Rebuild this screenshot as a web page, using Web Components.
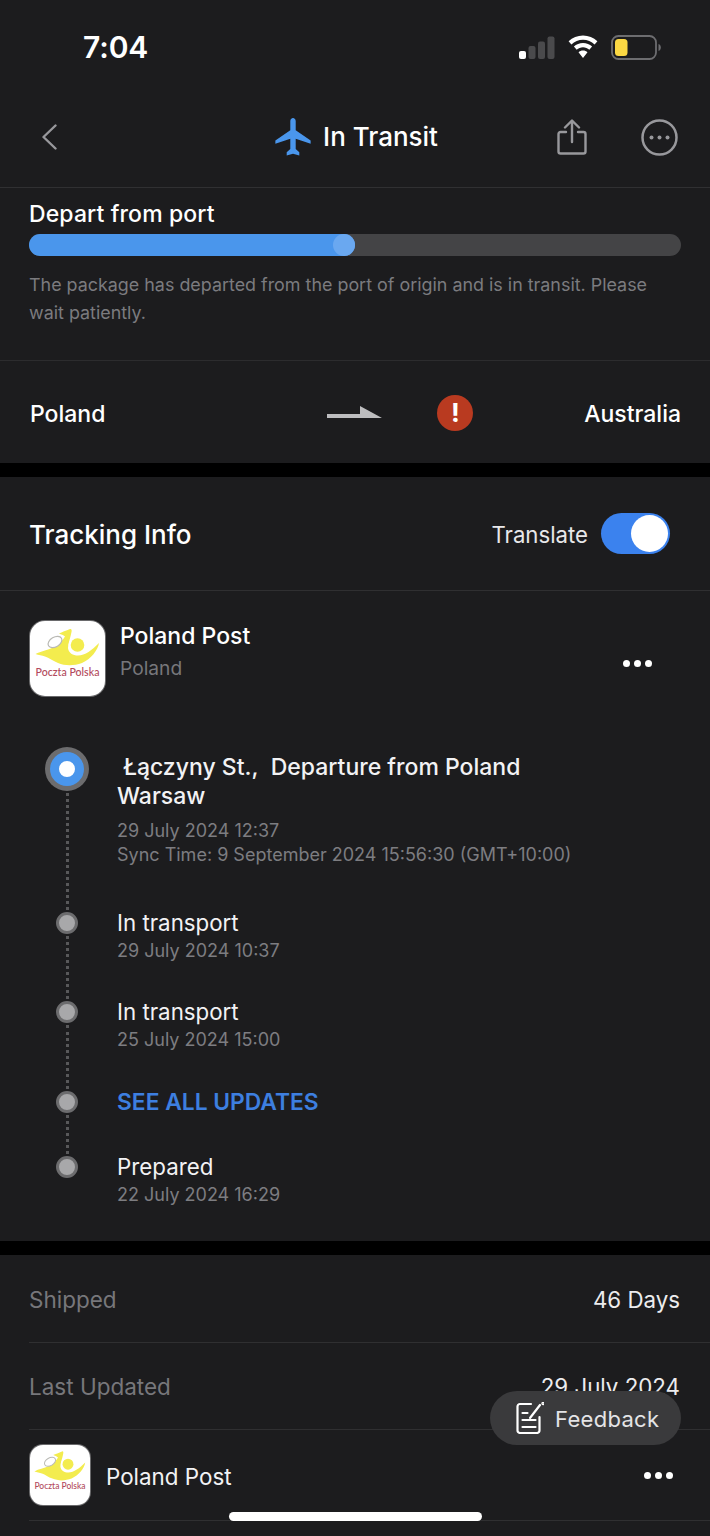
<!DOCTYPE html>
<html>
<head>
<meta charset="utf-8">
<style>
  html, body { margin: 0; padding: 0; background: #000; }
  body { width: 710px; height: 1536px; overflow: hidden; position: relative; font-family: 'Inter', 'Liberation Sans', sans-serif; color: #fff; }
</style>
</head>
<body>
<status-bar></status-bar>
<nav-bar></nav-bar>
<progress-card>
  <span slot="title">Depart from port</span>
  The package has departed from the port of origin and is in transit. Please wait patiently.
</progress-card>
<route-row from="Poland" to="Australia"></route-row>
<tracking-card>
  <carrier-head name="Poland Post" country="Poland"></carrier-head>
  <track-event kind="current" height="165">
    <span slot="title">&nbsp;Łączyny St.,&nbsp; Departure from Poland<br>Warsaw</span>
    <span slot="meta">29 July 2024 12:37<br>Sync Time: 9 September 2024 15:56:30 (GMT+10:00)</span>
  </track-event>
  <track-event height="89">
    <span slot="title">In transport</span>
    <span slot="meta">29 July 2024 10:37</span>
  </track-event>
  <track-event height="90">
    <span slot="title">In transport</span>
    <span slot="meta">25 July 2024 15:00</span>
  </track-event>
  <track-event kind="link" height="65">
    <span slot="title">SEE ALL UPDATES</span>
  </track-event>
  <track-event kind="last" height="83">
    <span slot="title">Prepared</span>
    <span slot="meta">22 July 2024 16:29</span>
  </track-event>
</tracking-card>
<detail-list>
  <detail-row label="Shipped" value="46 Days"></detail-row>
  <detail-row label="Last Updated" value="29 July 2024"></detail-row>
  <carrier-row name="Poland Post"></carrier-row>
</detail-list>
<feedback-pill>Feedback</feedback-pill>
<home-indicator></home-indicator>

<script>
const baseFont = `font-family: 'Inter', 'Liberation Sans', sans-serif;`;

class StatusBar extends HTMLElement {
  constructor() {
    super();
    this.attachShadow({ mode: 'open' });
    this.shadowRoot.innerHTML = `
    <style>
      :host { display: flex; align-items: center; justify-content: space-between; height: 95px; box-sizing: border-box; padding: 0 49px 2px 83px; background: #1c1c1e; ${baseFont} }
      .time { font-size: 30px; font-weight: 600; color: #fff; letter-spacing: -0.1px; }
      .icons { display: flex; align-items: center; gap: 13px; margin-top: 2px; }
      svg { display: block; }
    </style>
    <span class="time">7:04</span>
    <div class="icons">
      <svg width="36" height="24" viewBox="0 0 36 24">
        <rect x="0" y="15" width="7" height="8" rx="2" fill="#fff"/>
        <rect x="9.5" y="10" width="7" height="13" rx="2" fill="#4a4a4c"/>
        <rect x="19" y="5.5" width="7" height="17.5" rx="2" fill="#4a4a4c"/>
        <rect x="28.5" y="0.5" width="7" height="22.5" rx="2" fill="#4a4a4c"/>
      </svg>
      <svg width="30" height="24" viewBox="0 0 30 24" fill="#fff" style="margin-top:-1px">
        <path d="M15 0.5C9.5 0.5 4.5 2.6 0.6 6.2L3.4 9.4C6.5 6.5 10.6 4.8 15 4.8s8.5 1.7 11.6 4.6l2.8-3.2C25.5 2.6 20.5 0.5 15 0.5z"/>
        <path d="M15 8c-3.500 0-6.700 1.300-9.100 3.500l2.800 3.200c1.700-1.500 3.900-2.400 6.300-2.400s4.600 0.900 6.300 2.400l2.800-3.200C21.700 9.300 18.500 8 15 8z"/>
        <path d="M15 15.500c-1.700 0-3.300 0.600-4.500 1.700L15 23l4.500-5.800c-1.200-1.100-2.800-1.700-4.500-1.700z"/>
      </svg>
      <svg width="50" height="25" viewBox="0 0 50 25">
        <rect x="1" y="1" width="44" height="23" rx="6.5" fill="none" stroke="#6d6d70" stroke-width="1.800"/>
        <rect x="4" y="4" width="12.500" height="17" rx="3.500" fill="#fbd843"/>
        <path d="M47.500 9c1.500 0.500 2.300 1.900 2.300 3.500s-0.800 3-2.300 3.500z" fill="#6d6d70"/>
      </svg>
    </div>`;
  }
}

class NavBar extends HTMLElement {
  constructor() {
    super();
    this.attachShadow({ mode: 'open' });
    this.shadowRoot.innerHTML = `
    <style>
      :host { display: grid; grid-template-columns: 1fr auto 1fr; align-items: center; height: 93px; box-sizing: border-box; padding: 0 32px 8px 41px; background: #1c1c1e; border-bottom: 1px solid #303032; ${baseFont} }
      .title { display: flex; align-items: center; gap: 12px; padding-right: 6px; font-size: 26px; font-weight: 500; color: #fff; }
      .title span { margin-top: -2px; }
      .right { display: flex; justify-content: flex-end; align-items: center; gap: 54px; }
      svg { display: block; }
    </style>
    <svg width="17" height="26" viewBox="0 0 17 26" fill="none" stroke="#98989c" stroke-width="2.400" stroke-linecap="round" stroke-linejoin="round"><path d="M14.500 1.500 2.500 13l12 11.500"/></svg>
    <div class="title">
      <svg width="36" height="38" viewBox="2 2 20 20" fill="#4a96ec" preserveAspectRatio="none"><path d="M21.800 15.500v-1.700l-8.300-5.300V3.600C13.500 2.700 12.800 2 12 2s-1.500 0.700-1.500 1.600v4.900l-8.300 5.300v1.700l8.300-2.600v5.400L8.500 20v1.700l3.500-0.900 3.500 0.900V20l-2-1.700v-5.400z"/></svg>
      <span>In Transit</span>
    </div>
    <div class="right">
      <svg width="30" height="36" viewBox="0 0 30 36" fill="none" stroke="#98989c" stroke-width="2.400" stroke-linecap="round" stroke-linejoin="round"><path d="M9 13H3.500A2 2 0 0 0 1.500 15v17.500a2 2 0 0 0 2 2h23a2 2 0 0 0 2-2V15a2 2 0 0 0-2-2H21"/><path d="M15 23V2M8 8.500 15 1.500l7 7"/></svg>
      <svg width="37" height="37" viewBox="0 0 37 37"><circle cx="18.500" cy="18.500" r="17" fill="none" stroke="#98989c" stroke-width="2.500"/><circle cx="10.500" cy="18.500" r="2" fill="#98989c"/><circle cx="18.500" cy="18.500" r="2" fill="#98989c"/><circle cx="26.500" cy="18.500" r="2" fill="#98989c"/></svg>
    </div>`;
  }
}

class ProgressCard extends HTMLElement {
  constructor() {
    super();
    this.attachShadow({ mode: 'open' });
    this.shadowRoot.innerHTML = `
    <style>
      :host { display: block; height: 173px; box-sizing: border-box; padding: 13px 29px 0 29px; background: #1c1c1e; border-bottom: 1px solid #2c2c2e; ${baseFont} }
      .title { font-size: 23px; font-weight: 500; line-height: 27px; color: #fff; letter-spacing: 0.12px; }
      .track { margin-top: 6px; height: 22px; border-radius: 11px; background: #444446; position: relative; }
      .fill { width: 326px; height: 22px; border-radius: 11px; background: #4a96ec; position: relative; }
      .fill::after { content: ''; position: absolute; right: 0; top: 0; width: 22px; height: 22px; border-radius: 50%; background: #6aa8f0; }
      .text { margin: 15px 0 0; font-size: 17.900px; line-height: 28px; color: #7b7b7f; }
    </style>
    <div class="title"><slot name="title"></slot></div>
    <div class="track"><div class="fill"></div></div>
    <p class="text"><slot></slot></p>`;
  }
}

class RouteRow extends HTMLElement {
  constructor() {
    super();
    this.attachShadow({ mode: 'open' });
    this.shadowRoot.innerHTML = `
    <style>
      :host { display: flex; align-items: center; height: 102px; box-sizing: border-box; padding: 1px 29px 0 30px; background: #1c1c1e; ${baseFont} }
      span.name { font-size: 23px; font-weight: 500; color: #fff; margin-top: 2px; }
      .mid { flex: 1; display: flex; align-items: center; padding-left: 222px; gap: 55px; }
      .alert { width: 36px; height: 36px; border-radius: 50%; background: #b93a20; color: #fff; font-size: 26px; font-weight: 700; line-height: 36px; text-align: center; }
      svg { display: block; margin-top: -1px; }
    </style>
    <span class="name">${this.getAttribute('from')}</span>
    <div class="mid">
      <svg width="55" height="12" viewBox="0 0 55 12"><path d="M0 8h33V0l22 12H0z" fill="#bdbdbf"/></svg>
      <div class="alert">!</div>
    </div>
    <span class="name">${this.getAttribute('to')}</span>`;
  }
}

class TrackingCard extends HTMLElement {
  constructor() {
    super();
    this.attachShadow({ mode: 'open' });
    this.shadowRoot.innerHTML = `
    <style>
      :host { display: block; margin-top: 14px; height: 764px; background: #1c1c1e; box-sizing: border-box; ${baseFont} }
      .head { display: flex; align-items: center; height: 114px; box-sizing: border-box; padding: 2px 40px 0 29px; border-bottom: 1px solid #2f2f31; }
      h2 { flex: 1; margin: 0; font-size: 26px; font-weight: 500; color: #fff; }
      .label { font-size: 22.200px; color: #e8e8ea; margin-right: 13px; }
      .toggle { width: 69px; height: 41px; border-radius: 21px; background: #3b82ee; position: relative; margin-top: -2px; }
      .toggle::after { content: ''; position: absolute; right: 2px; top: 2px; width: 37px; height: 37px; border-radius: 50%; background: #fff; }
    </style>
    <div class="head"><h2>Tracking Info</h2><span class="label">Translate</span><div class="toggle"></div></div>
    <slot></slot>`;
  }
}

const logoMarkup = (size) => `
  <svg width="${size}" height="${size}" viewBox="0 0 75 75">
    <path d="M5.500 33C11 30 17 29.500 24 26C29 23.500 33 19 35 15.500C33.500 14 31 13.500 29 12.500C32 11 36 9.800 40 8C41.500 7.500 42 9 41.500 11C40.500 17 38 22 38 27C38.500 32 43 34.500 48 34.500C55 34.500 62 29 69 22C68 29 61 38 52 42C44 45 35 45 28 42C23 40 19 37 15 35.500C12 34.500 8.500 34 5.500 33Z" fill="#f3ec4e"/>
    <circle cx="47.500" cy="24" r="8.800" fill="#fff"/>
    <circle cx="47.500" cy="24" r="6.800" fill="#f3ec4e"/>
    <ellipse cx="25" cy="21" rx="7.500" ry="4.800" transform="rotate(-30 25 21)" fill="#fff" stroke="#b9b9b4" stroke-width="1.200"/>
    <text x="37.500" y="55" text-anchor="middle" font-family="Lato, 'Liberation Sans', sans-serif" font-weight="500" font-size="10.600" fill="#b24a5c">Poczta Polska</text>
  </svg>`;

class CarrierHead extends HTMLElement {
  constructor() {
    super();
    this.attachShadow({ mode: 'open' });
    this.shadowRoot.innerHTML = `
    <style>
      :host { display: flex; align-items: flex-start; height: 156px; box-sizing: border-box; padding: 30px 58px 0 30px; ${baseFont} }
      .logo { width: 75px; height: 75px; border-radius: 15px; background: #fff; box-shadow: 0 0 0 1px #6a6a6c; flex: none; }
      .logo svg { display: block; }
      .info { flex: 1; margin-left: 15px; }
      .name { font-size: 23px; font-weight: 500; line-height: 30px; color: #fff; }
      .country { font-size: 19.200px; line-height: 30px; color: #77777b; margin-top: 2px; }
      .dots { display: flex; gap: 4px; margin-top: 39px; }
      .dots i { width: 7px; height: 7px; border-radius: 50%; background: #fff; }
    </style>
    <div class="logo">${logoMarkup(75)}</div>
    <div class="info"><div class="name">${this.getAttribute('name')}</div><div class="country">${this.getAttribute('country')}</div></div>
    <div class="dots"><i></i><i></i><i></i></div>`;
  }
}

class TrackEvent extends HTMLElement {
  constructor() {
    super();
    const kind = this.getAttribute('kind') || '';
    this.attachShadow({ mode: 'open' });
    this.shadowRoot.innerHTML = `
    <style>
      :host { display: grid; grid-template-columns: 44px 1fr; column-gap: 28px; padding-left: 45px; height: ${this.getAttribute('height')}px; box-sizing: border-box; ${baseFont} }
      .rail { display: flex; flex-direction: column; align-items: center; }
      .dot { flex: none; box-sizing: border-box; width: 22px; height: 22px; border-radius: 50%; background: #a8a8aa; border: 3px solid #6c6c6e; }
      .dot.current { width: 44px; height: 44px; border: 0; display: flex; align-items: center; justify-content: center; background: #6c6c6e; }
      .dot.current::after { content: ''; width: 16px; height: 16px; border-radius: 50%; background: #fff; border: 9px solid #4a96ec; flex: none; box-sizing: content-box; }
      .line { flex: 1; width: 0; border-left: 3px dotted #58585a; margin: 2px 0; }
      .current-body { padding-top: 4px; }
      .title { font-size: 22.300px; line-height: 29px; color: #f2f2f4; margin-top: -4px; }
      .current-body .title { font-size: 23px; font-weight: 500; margin-top: 2px; }
      .link { font-size: 22.800px; font-weight: 600; color: #3d7fe0; line-height: 22px; }
      .meta { font-size: 18px; line-height: 24px; color: #7d7d81; margin-top: 2px; }
      .current-body .meta { margin-top: 8px; }
    </style>
    <div class="rail">
      <div class="dot ${kind === 'current' ? 'current' : ''}"></div>
      ${kind === 'last' ? '' : '<div class="line"></div>'}
    </div>
    <div class="body ${kind === 'current' ? 'current-body' : ''}">
      <div class="${kind === 'link' ? 'link' : 'title'}"><slot name="title"></slot></div>
      <div class="meta"><slot name="meta"></slot></div>
    </div>`;
  }
}

class DetailList extends HTMLElement {
  constructor() {
    super();
    this.attachShadow({ mode: 'open' });
    this.shadowRoot.innerHTML = `
    <style>
      :host { display: block; margin-top: 14px; background: #1c1c1e; height: 300px; box-sizing: border-box; padding-left: 29px; ${baseFont} }
    </style>
    <slot></slot>`;
  }
}

class DetailRow extends HTMLElement {
  constructor() {
    super();
    this.attachShadow({ mode: 'open' });
    this.shadowRoot.innerHTML = `
    <style>
      :host { display: flex; align-items: center; justify-content: space-between; height: 87.500px; box-sizing: border-box; padding: 2px 30px 0 0; border-bottom: 1px solid #2f2f31; ${baseFont} }
      .label { font-size: 22.500px; color: #77777b; }
      .value { font-size: 22.300px; color: #ececee; }
    </style>
    <span class="label">${this.getAttribute('label')}</span>
    <span class="value">${this.getAttribute('value')}</span>`;
  }
}

class CarrierRow extends HTMLElement {
  constructor() {
    super();
    this.attachShadow({ mode: 'open' });
    this.shadowRoot.innerHTML = `
    <style>
      :host { display: flex; align-items: center; height: 91px; box-sizing: border-box; padding-right: 37px; border-bottom: 1px solid #2f2f31; ${baseFont} }
      .logo { width: 60px; height: 60px; margin-left: 1px; border-radius: 13px; background: #fff; box-shadow: 0 0 0 1px #6a6a6c; flex: none; }
      .logo svg { display: block; }
      .name { flex: 1; margin: 2px 0 0 16px; font-size: 22.400px; color: #f2f2f4; }
      .dots { display: flex; gap: 4px; }
      .dots i { width: 7px; height: 7px; border-radius: 50%; background: #fff; }
    </style>
    <div class="logo">${logoMarkup(60)}</div>
    <span class="name">${this.getAttribute('name')}</span>
    <div class="dots"><i></i><i></i><i></i></div>`;
  }
}

class FeedbackPill extends HTMLElement {
  constructor() {
    super();
    this.attachShadow({ mode: 'open' });
    this.shadowRoot.innerHTML = `
    <style>
      :host { position: absolute; left: 490px; top: 1391px; width: 191px; height: 54px; box-sizing: border-box; display: flex; align-items: center; gap: 11px; padding-left: 26px; border-radius: 27px; background: #3a3a3c; font-size: 22px; color: #e4e4e6; letter-spacing: 0.3px; ${baseFont} }
      svg { display: block; flex: none; }
      span { margin-top: 1px; }
    </style>
    <svg width="28" height="32" viewBox="0 0 28 32" fill="none" stroke="#fff" stroke-width="2.200" stroke-linecap="round" stroke-linejoin="round">
      <path d="M15 2H4a2.500 2.500 0 0 0-2.500 2.500v24A2.500 2.500 0 0 0 4 31h17a2.500 2.500 0 0 0 2.500-2.500V15"/>
      <path d="M6.500 11h5M6.500 18h13M6.500 25h13M14 16 24 3"/>
      <circle cx="27" cy="1.500" r="0.600" fill="#fff"/>
    </svg>
    <span><slot></slot></span>`;
  }
}

class HomeIndicator extends HTMLElement {
  constructor() {
    super();
    this.attachShadow({ mode: 'open' });
    this.shadowRoot.innerHTML = `
    <style>
      :host { position: absolute; left: 229px; top: 1512px; width: 253px; height: 9px; border-radius: 5px; background: #fff; }
    </style>`;
  }
}

customElements.define('status-bar', StatusBar);
customElements.define('nav-bar', NavBar);
customElements.define('progress-card', ProgressCard);
customElements.define('route-row', RouteRow);
customElements.define('tracking-card', TrackingCard);
customElements.define('carrier-head', CarrierHead);
customElements.define('track-event', TrackEvent);
customElements.define('detail-list', DetailList);
customElements.define('detail-row', DetailRow);
customElements.define('carrier-row', CarrierRow);
customElements.define('feedback-pill', FeedbackPill);
customElements.define('home-indicator', HomeIndicator);
</script>
</body>
</html>
